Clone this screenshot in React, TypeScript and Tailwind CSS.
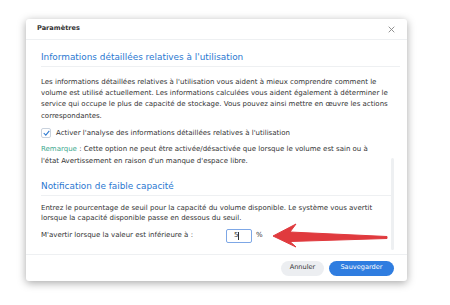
import React from 'react';

const font = { fontFamily: '"DejaVu Sans", Verdana, sans-serif' };

export default function App() {
  return (
    <div className="w-[450px] h-[305px] bg-white pt-[19px] pl-[26px]" style={font}>
      <div className="relative w-[381px] h-[262px] bg-white rounded-[3px] shadow-[0_2px_8px_rgba(0,0,0,0.35)] flex flex-col">
        {/* header */}
        <div className="h-[21px] flex items-center justify-between pl-[11px] pr-[12px] border-b border-[#eef0f2] shrink-0">
          <span className="text-[6.6px] font-bold text-[#333]">Paramètres</span>
          <svg width="7" height="7" viewBox="0 0 10 10" className="text-[#888]">
            <path d="M1 1 L9 9 M9 1 L1 9" stroke="currentColor" strokeWidth="1.3" />
          </svg>
        </div>

        {/* body */}
        <div className="flex-1 pl-[15px] pr-[7px] text-[7px] leading-[11.2px] text-[#333]">
          <div className="pt-[11px] pb-[2px] border-b border-[#eef0f2]">
            <h2 className="text-[8.9px] leading-[13px] text-[#2a78d1]">Informations détaillées relatives à l'utilisation</h2>
          </div>
          <p className="mt-[10px] pr-[4px]">
            Les informations détaillées relatives à l'utilisation vous aident à mieux comprendre comment le volume est utilisé actuellement. Les informations calculées vous aident également à déterminer le service qui occupe le plus de capacité de stockage. Vous pouvez ainsi mettre en œuvre les actions correspondantes.
          </p>
          <label className="mt-[6px] flex items-center gap-[5px]">
            <span className="w-[10px] h-[10px] rounded-[2px] border border-[#c9d2dd] flex items-center justify-center bg-white shrink-0">
              <svg width="7" height="6" viewBox="0 0 10 8">
                <path d="M1 4 L4 7 L9 1" fill="none" stroke="#2a78d1" strokeWidth="1.5" />
              </svg>
            </span>
            <span>Activer l'analyse des informations détaillées relatives à l'utilisation</span>
          </label>
          <p className="mt-[5px] pr-[20px] leading-[11.8px]">
            <span className="text-[#3ea98f]">Remarque</span> : Cette option ne peut être activée/désactivée que lorsque le volume est sain ou à l'état Avertissement en raison d'un manque d'espace libre.
          </p>
          <div className="mt-[12px] pb-[2px] border-b border-[#eef0f2] mr-[8px]">
            <h2 className="text-[8.9px] leading-[13px] text-[#2a78d1]">Notification de faible capacité</h2>
          </div>
          <p className="mt-[7px] pr-[8px] leading-[10.5px]">
            Entrez le pourcentage de seuil pour la capacité du volume disponible. Le système vous avertit lorsque la capacité disponible passe en dessous du seuil.
          </p>
          <div className="mt-[5px] flex items-center">
            <span className="w-[185px]">M'avertir lorsque la valeur est inférieure à :</span>
            <span className="w-[26px] h-[14px] border border-[#7da7e6] rounded-[2px] flex items-center pl-[7px] text-[7px]">
              5<span className="w-[0.5px] h-[8px] bg-[#333]" />
            </span>
            <span className="ml-[4px]">%</span>
          </div>
        </div>

        {/* scrollbar */}
        <div className="absolute left-[365px] top-[139px] w-[3px] h-[92px] bg-[#eef0f2] rounded-full" />

        {/* footer */}
        <div className="h-[27px] border-t border-[#eef0f2] flex items-center justify-end gap-[5px] pr-[13px] shrink-0">
          <button className="w-[43px] h-[15px] rounded-full bg-[#eceef1] text-[6.6px] text-[#333]">Annuler</button>
          <button className="w-[65px] h-[15px] rounded-full bg-[#2f7de0] text-[6.6px] text-white">Sauvegarder</button>
        </div>

        {/* red arrow */}
        <svg className="absolute left-[245px] top-[203px]" width="118" height="27" viewBox="0 0 118 27">
          <path d="M2 14 L25 2 L19 10 L116 14.5 L116 16.5 L19 19.5 L25 25 Z" fill="#e03a3e" stroke="#e03a3e" strokeWidth="1" strokeLinejoin="round" />
        </svg>
      </div>
    </div>
  );
}
